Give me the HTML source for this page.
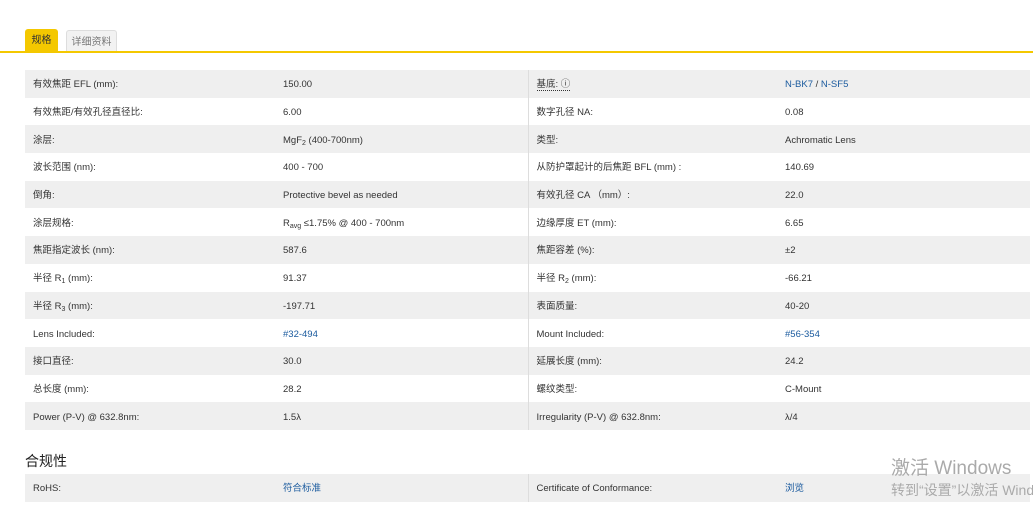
<!DOCTYPE html>
<html><head><meta charset="utf-8"><style>
body{margin:0;width:1033px;height:523px;background:#fff;font-family:"Liberation Sans","Noto Sans CJK SC",sans-serif;color:#333;overflow:hidden;position:relative}
.tabs{position:absolute;left:0;top:0;width:1033px;height:53px;border-bottom:2px solid #f4c800;box-sizing:border-box}
.t1{position:absolute;left:25px;top:29px;width:33px;height:22px;background:#f4c800;border-radius:3px 3px 0 0;font-size:10px;line-height:24px;text-align:center;color:#333}
.t2{position:absolute;left:66px;top:30px;width:51px;height:21px;background:#f2f2f2;border:1px solid #ddd;border-bottom:none;border-radius:3px 3px 0 0;font-size:10px;line-height:23px;text-align:center;color:#777;box-sizing:border-box}
table{position:absolute;left:25px;border-collapse:collapse;width:1005px;font-size:9.5px;table-layout:fixed}
td{height:27.7px;padding:2px 0 0 8px;box-sizing:border-box;vertical-align:middle;line-height:13px;white-space:nowrap}
tr:nth-child(odd) td{background:#efefef}
td.c1{width:250px}td.c2{width:253px;border-right:1px solid #ddd}td.c3{width:249px}
a{color:#1a5a9e;text-decoration:none}
h3{position:absolute;left:25px;top:451px;margin:0;font-size:14px;font-weight:normal;color:#222}
.wm{position:absolute;left:891px;color:#aaa;white-space:nowrap}
sub{font-size:7px;line-height:0;vertical-align:-2px}
</style></head><body>
<div class="tabs"><div class="t1">规格</div><div class="t2">详细资料</div></div>
<table style="top:70px">
<tr><td class="c1">有效焦距 EFL (mm):</td><td class="c2">150.00</td><td class="c3"><span style="border-bottom:1px dotted #333">基底: ⓘ</span></td><td><a>N-BK7</a> / <a>N-SF5</a></td></tr>
<tr><td class="c1">有效焦距/有效孔径直径比:</td><td class="c2">6.00</td><td class="c3">数字孔径 NA:</td><td>0.08</td></tr>
<tr><td class="c1">涂层:</td><td class="c2">MgF<sub>2</sub> (400-700nm)</td><td class="c3">类型:</td><td>Achromatic Lens</td></tr>
<tr><td class="c1">波长范围 (nm):</td><td class="c2">400 - 700</td><td class="c3">从防护罩起计的后焦距 BFL (mm) :</td><td>140.69</td></tr>
<tr><td class="c1">倒角:</td><td class="c2">Protective bevel as needed</td><td class="c3">有效孔径 CA （mm）:</td><td>22.0</td></tr>
<tr><td class="c1">涂层规格:</td><td class="c2">R<sub>avg</sub> ≤1.75% @ 400 - 700nm</td><td class="c3">边缘厚度 ET (mm):</td><td>6.65</td></tr>
<tr><td class="c1">焦距指定波长 (nm):</td><td class="c2">587.6</td><td class="c3">焦距容差 (%):</td><td>±2</td></tr>
<tr><td class="c1">半径 R<sub>1</sub> (mm):</td><td class="c2">91.37</td><td class="c3">半径 R<sub>2</sub> (mm):</td><td>-66.21</td></tr>
<tr><td class="c1">半径 R<sub>3</sub> (mm):</td><td class="c2">-197.71</td><td class="c3">表面质量:</td><td>40-20</td></tr>
<tr><td class="c1">Lens Included:</td><td class="c2"><a>#32-494</a></td><td class="c3">Mount Included:</td><td><a>#56-354</a></td></tr>
<tr><td class="c1">接口直径:</td><td class="c2">30.0</td><td class="c3">延展长度 (mm):</td><td>24.2</td></tr>
<tr><td class="c1">总长度 (mm):</td><td class="c2">28.2</td><td class="c3">螺纹类型:</td><td>C-Mount</td></tr>
<tr><td class="c1">Power (P-V) @ 632.8nm:</td><td class="c2">1.5λ</td><td class="c3">Irregularity (P-V) @ 632.8nm:</td><td>λ/4</td></tr>
</table>
<h3>合规性</h3>
<table style="top:474px">
<tr><td class="c1">RoHS:</td><td class="c2"><a>符合标准</a></td><td class="c3">Certificate of Conformance:</td><td><a>浏览</a></td></tr>
</table>
<div class="wm" style="top:453px;font-size:19px">激活 Windows</div>
<div class="wm" style="top:480px;font-size:14px">转到“设置”以激活 Windows。</div>
</body></html>
